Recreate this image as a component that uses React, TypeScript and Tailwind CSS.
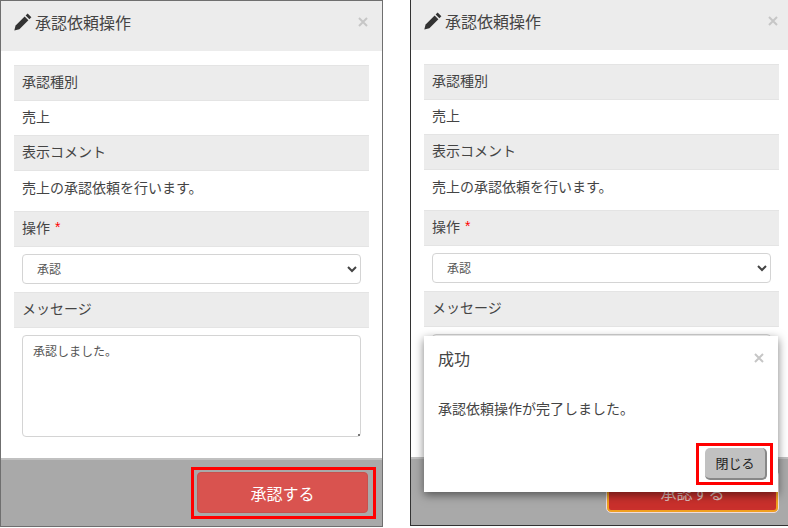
import React from "react";

function Pencil() {
  return (
    <svg width="18" height="18" viewBox="0 0 18 18" className="shrink-0" fill="#333">
      <path d="M0.3 17.5 L1.6 12.4 L10.6 3.4 L14.4 7.2 L5.4 16.2 Z" />
      <path d="M11.6 2.4 L13.6 0.4 L17.4 4.2 L15.4 6.2 Z" />
    </svg>
  );
}

function Close({ className }: { className: string }) {
  return (
    <svg width="10" height="10" viewBox="0 0 10 10" className={`shrink-0 ${className}`} fill="none" stroke="#c6c6c6" strokeWidth="2">
      <path d="M1 1l8 8M9 1l-8 8" />
    </svg>
  );
}

function GreyRow({ children }: { children: React.ReactNode }) {
  return (
    <div className="h-9 shrink-0 flex items-center pb-[3px] bg-[#ececec] border-y border-[#e4e4e4] px-2 text-[14px] text-[#444]">
      <span className="flex items-center">{children}</span>
    </div>
  );
}

function Panel({
  children,
  cta,
  className,
}: {
  children?: React.ReactNode;
  cta: React.ReactNode;
  className: string;
}) {
  return (
    <div className={`relative shrink-0 w-[383px] h-[527px] bg-white border flex flex-col ${className}`}>
      <div className="h-[50px] shrink-0 bg-[#ececec] flex items-start justify-between pl-[13px] pr-[14px] pt-[9px]">
        <div className="flex items-center gap-[3px] text-[16px] leading-[24px] text-[#444]">
          <Pencil />
          <span>承認依頼操作</span>
        </div>
        <Close className="mt-[7px]" />
      </div>
      <div className="flex-1 px-[13px] pt-[14px] flex flex-col">
        <GreyRow>承認種別</GreyRow>
        <div className="h-[34px] shrink-0 flex items-center pb-[3px] px-2 text-[14px] text-[#444]">売上</div>
        <GreyRow>表示コメント</GreyRow>
        <div className="h-10 shrink-0 pb-[8px] flex items-center px-2 text-[14px] text-[#444]">売上の承認依頼を行います。</div>
        <GreyRow>
          操作<span className="ml-[5px] text-[#f00] font-['Liberation_Sans',sans-serif]">*</span>
        </GreyRow>
        <div className="mx-2 mt-[7px] mb-[8px] h-[30px] shrink-0 rounded-[4px] border border-[#d4d4d4] bg-white flex items-center justify-between pl-[14px] pr-[3px] text-[12px] text-[#555]">
          <span>承認</span>
          <svg width="10" height="7" viewBox="0 0 10 7" fill="none" stroke="#444" strokeWidth="2">
            <path d="M1 1l4 4 4-4" />
          </svg>
        </div>
        <GreyRow>メッセージ</GreyRow>
        <div className="relative mx-2 mt-[7px] h-[102px] shrink-0 rounded-[4px] border border-[#d4d4d4] bg-white px-[10px] py-[6px] text-[12px] leading-[18px] text-[#555]">
          承認しました。
          <span className="absolute right-0 bottom-0 w-[2px] h-[2px] bg-[#777]" />
        </div>
      </div>
      <div className="h-[68px] shrink-0 bg-[#a9a9a9] border-t-2 border-[#c0c0c0] flex justify-end items-start pt-[12px] pr-[14px]">
        {cta}
      </div>
      {children}
    </div>
  );
}

export default function App() {
  return (
    <div className="w-[788px] h-[528px] overflow-hidden bg-white flex items-start font-['Noto_Sans_CJK_JP',sans-serif]">
      <Panel
        className="border-[#6f6f6f]"
        cta={
          <div className="relative w-[171px] h-[41px] rounded-[4px] bg-[#d9534f] border border-[#c9504c] flex items-center justify-center text-white text-[16px]">
            承認する
            <span className="absolute -left-[7px] -right-[9px] -top-[6px] -bottom-[7px] border-[3px] border-[#f00]" />
          </div>
        }
      />
      <Panel
        className="ml-[27px] -mt-px border-[#333]"
        cta={
          <div className="w-[171px] h-[41px] rounded-[4px] bg-[#c9302c] border-2 border-[#f0a020] outline outline-[#f0dcdc] flex items-center justify-center text-[#e0c0be] text-[16px]">
            承認する
          </div>
        }
      >
        <div className="absolute left-[13px] top-[336px] w-[354px] h-[156px] bg-white shadow-[0_3px_9px_rgba(0,0,0,0.5)] flex flex-col">
          <div className="flex justify-between items-start pl-[14px] pr-[14px] pt-[9px]">
            <span className="text-[16px] leading-[26px] text-[#444]">成功</span>
            <Close className="mt-[8px]" />
          </div>
          <div className="pl-[14px] mt-[27px] text-[14px] leading-[20px] text-[#444]">承認依頼操作が完了しました。</div>
          <div className="relative mt-auto mb-[12px] mr-[11px] self-end w-[62px] h-[32px] rounded-[5px] bg-[#c1c1c1] border-r-2 border-b-2 border-[#888] flex items-center justify-center text-[13px] text-[#222]">
            閉じる
            <span className="absolute -left-[9px] -right-[8px] -top-[5px] -bottom-[7px] border-[3px] border-[#f00]" />
          </div>
        </div>
      </Panel>
    </div>
  );
}
